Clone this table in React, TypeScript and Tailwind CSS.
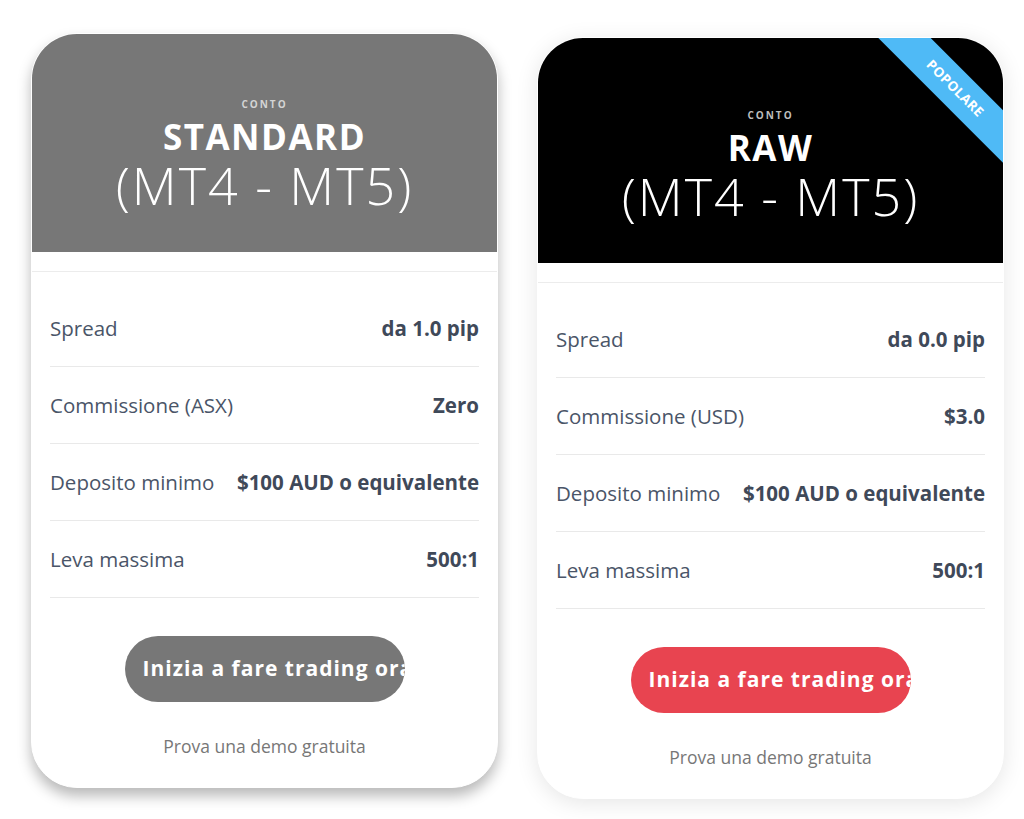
import React from "react";

type Row = { label: string; value: string };

const font = { fontFamily: '"Open Sans", "Noto Sans", sans-serif' };

function Card({
  title,
  headerBg,
  headerH,
  headerPt,
  rows,
  btnBg,
  shadow,
  ribbon,
  contoColor,
}: {
  title: string;
  headerBg: string;
  headerH: string;
  headerPt: string;
  rows: Row[];
  btnBg: string;
  shadow: string;
  ribbon?: boolean;
  contoColor: string;
}) {
  return (
    <div className={`w-[467px] rounded-[46px] bg-white border border-white overflow-hidden ${shadow}`}>
      <div className={`relative flex flex-col items-center overflow-hidden ${headerBg} ${headerH} ${headerPt}`}>
        <div className={`text-[10px] leading-[12px] font-bold tracking-[2px] ${contoColor}`}>CONTO</div>
        <div className="mt-[8px] text-[35px] leading-[38px] font-bold tracking-[1.5px] text-white">{title}</div>
        <div className="mt-[3px] text-[52px] leading-[52px] font-light tracking-[2px] text-white">(MT4 - MT5)</div>
        {ribbon && (
          <div className="absolute left-[287px] top-[32px] w-[260px] h-[37px] bg-[#4fbaf6] rotate-45 flex items-center justify-center">
            <span className="text-[13.5px] font-bold tracking-[0.3px] text-white">POPOLARE</span>
          </div>
        )}
      </div>
      <div className="h-[20px] border-b border-[#ececec]" />
      <div className="px-[18px] pt-[18px]">
        {rows.map((r) => (
          <div key={r.label} className="h-[77px] flex items-center justify-between border-b border-[#e9e9e9] text-[#4a5568]">
            <span className="text-[20.5px]">{r.label}</span>
            <span className="text-[20.5px] font-bold text-[#3f4959]">{r.value}</span>
          </div>
        ))}
      </div>
      <div className="flex flex-col items-center pt-[38px] pb-[29px]">
        <div className={`w-[280px] h-[66px] rounded-full overflow-hidden flex items-center pl-[18px] ${btnBg}`}>
          <span className="whitespace-nowrap text-[21px] font-bold tracking-[1px] text-white">Inizia a fare trading ora</span>
        </div>
        <div className="mt-[32px] text-[17.5px] leading-[24px] text-[#777]">Prova una demo gratuita</div>
      </div>
    </div>
  );
}

export default function App() {
  return (
    <div className="w-[1024px] h-[819px] bg-white flex items-start gap-[39px] pl-[31px] pt-[33px]" style={font}>
      <Card
        title="STANDARD"
        headerBg="bg-[#777777]"
        headerH="h-[218px]"
        headerPt="pt-[64px]"
        contoColor="text-[#d4d4d4]"
        btnBg="bg-[#777777]"
        shadow="shadow-[0_8px_14px_rgba(0,0,0,0.28)]"
        rows={[
          { label: "Spread", value: "da 1.0 pip" },
          { label: "Commissione (ASX)", value: "Zero" },
          { label: "Deposito minimo", value: "$100 AUD o equivalente" },
          { label: "Leva massima", value: "500:1" },
        ]}
      />
      <div className="mt-[4px]">
        <Card
          title="RAW"
          headerBg="bg-black"
          headerH="h-[225px]"
          headerPt="pt-[71px]"
          contoColor="text-[#bdbdbd]"
          btnBg="bg-[#e84450]"
          shadow="shadow-[0_4px_22px_rgba(0,0,0,0.10)]"
          ribbon
          rows={[
            { label: "Spread", value: "da 0.0 pip" },
            { label: "Commissione (USD)", value: "$3.0" },
            { label: "Deposito minimo", value: "$100 AUD o equivalente" },
            { label: "Leva massima", value: "500:1" },
          ]}
        />
      </div>
    </div>
  );
}
